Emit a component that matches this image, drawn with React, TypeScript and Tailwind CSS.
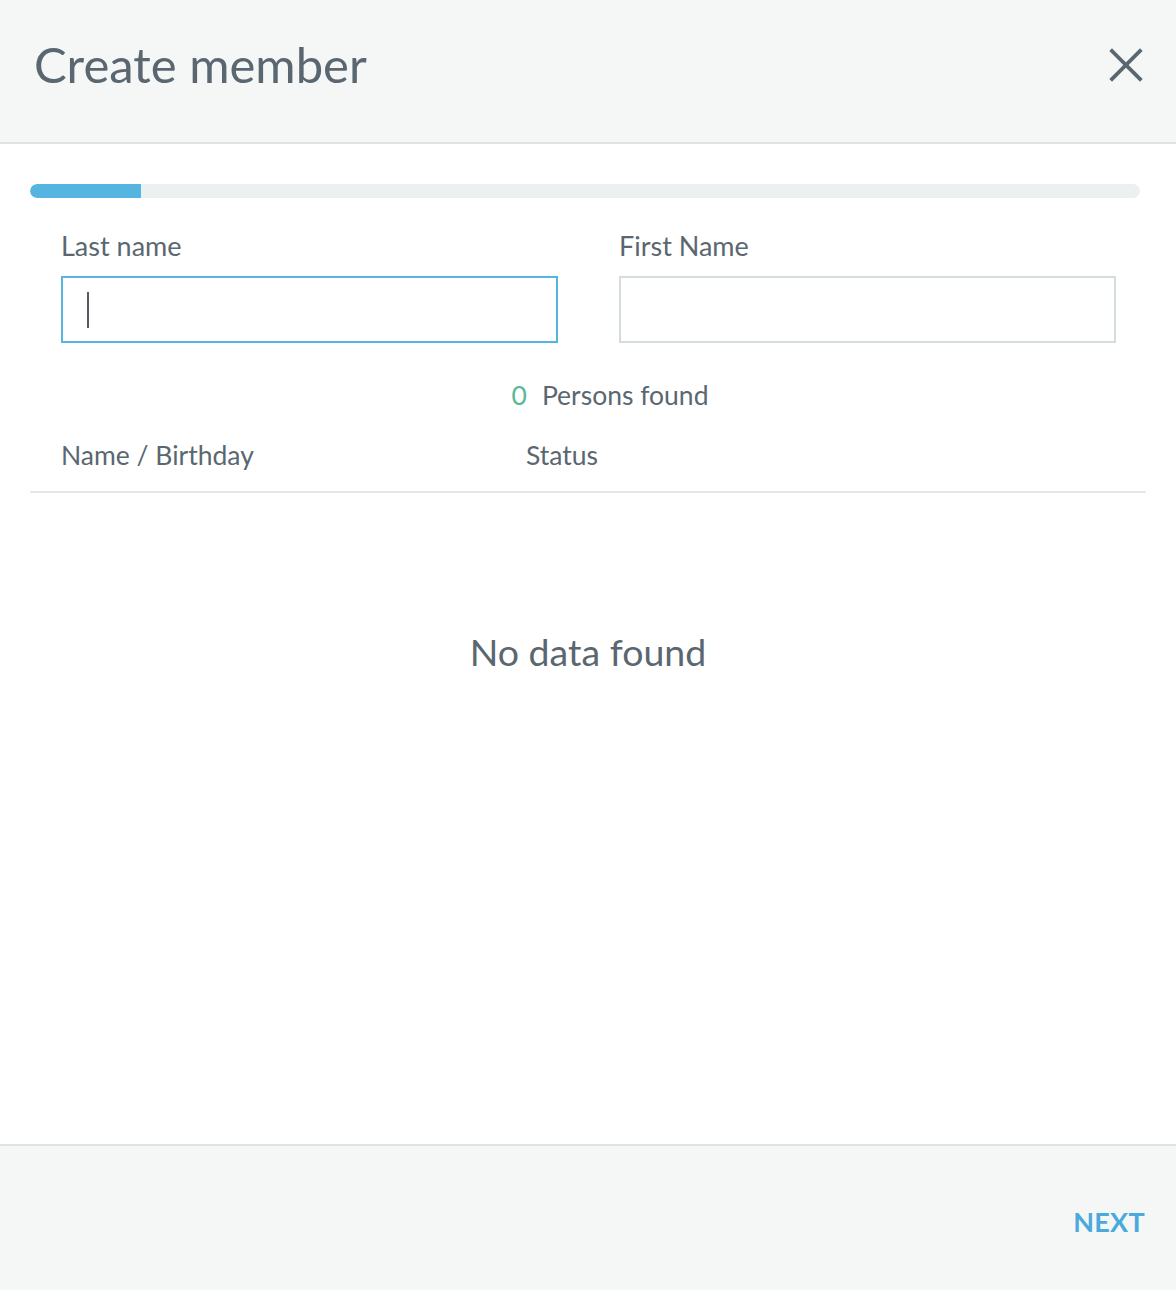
import React from "react";

export default function App() {
  const font = { fontFamily: '"Lato", "Open Sans", sans-serif' };
  return (
    <div className="w-[1176px] h-[1290px] flex flex-col bg-white text-[#5b6770]" style={font}>
      <header className="h-[144px] shrink-0 bg-[#f5f7f7] border-b-2 border-[#dfe3e5] flex items-center justify-between pl-[34px] pr-[34px]">
        <h1 className="text-[49px] leading-none font-normal text-[#5b6770] -mt-[14px]">Create member</h1>
        <button className="w-[36px] h-[36px] flex items-center justify-center -mt-[12px] -mr-[2px]">
          <svg width="34" height="34" viewBox="0 0 34 34" fill="none" stroke="#5b6770" strokeWidth="3.8" strokeLinecap="square">
            <line x1="3" y1="3" x2="31" y2="31" />
            <line x1="31" y1="3" x2="3" y2="31" />
          </svg>
        </button>
      </header>

      <main className="flex-1 flex flex-col pl-[30px] pr-[30px]">
        <div className="mt-[40px] mr-[6px] h-[14px] rounded-full bg-[#edf0f1] overflow-hidden">
          <div className="h-full w-[10%] bg-[#56b4e0] rounded-l-full"></div>
        </div>

        <div className="mt-[33px] pl-[31px] flex gap-[61px]">
          <div className="w-[497px] flex flex-col">
            <label className="text-[27px] leading-[30px] h-[30px]">Last name</label>
            <div className="mt-[15px] h-[67px] border-2 border-[#56b4e0] flex items-center pl-[24px]">
              <span className="w-[2px] h-[36px] bg-[#555b60]"></span>
            </div>
          </div>
          <div className="w-[497px] flex flex-col">
            <label className="text-[27px] leading-[30px] h-[30px]">First Name</label>
            <div className="mt-[15px] h-[67px] border-2 border-[#d4dcdc]"></div>
          </div>
        </div>

        <div className="mt-[37px] h-[30px] flex items-center justify-center text-[26.5px] leading-[30px] pl-[44px]">
          <span className="text-[#5cb89a]">0</span>
          <span className="ml-[15px]">Persons found</span>
        </div>

        <div className="mt-[30px] pl-[31px] flex items-center h-[30px] text-[26.5px] leading-[30px]">
          <span className="w-[465px]">Name / Birthday</span>
          <span>Status</span>
        </div>
        <div className="mt-[21px] h-[2px] bg-[#e6e6e6]"></div>

        <div className="mt-[136px] flex justify-center">
          <span className="text-[37.5px] leading-[46px]">No data found</span>
        </div>
      </main>

      <footer className="h-[146px] shrink-0 bg-[#f5f7f7] border-t-2 border-[#dfe3e5] flex items-center justify-end pr-[31px]">
        <button className="text-[27px] font-bold text-[#4aa9dd] tracking-[0.3px] leading-none mt-[6px]">NEXT</button>
      </footer>
    </div>
  );
}
